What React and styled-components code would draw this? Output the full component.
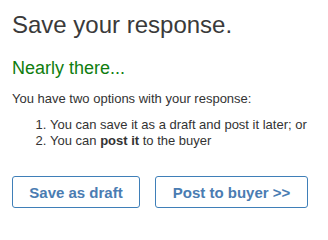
import React from "react";
import styled, { createGlobalStyle } from "styled-components";

const GlobalStyle = createGlobalStyle`
  html, body {
    margin: 0;
    padding: 0;
    background: #fff;
  }
  body {
    font-family: Arial, "Liberation Sans", sans-serif;
    color: #333;
  }
`;

const Panel = styled.div`
  padding: 10px 12px;
  width: 328px;
  box-sizing: border-box;
`;

const Title = styled.h1`
  margin: 0;
  font-size: 24px;
  font-weight: normal;
  color: #3a3a3a;
  line-height: 29px;
`;

const SubTitle = styled.h2`
  margin: 18px 0 0;
  font-size: 18px;
  font-weight: normal;
  color: #0f7d0f;
  line-height: 22px;
`;

const Text = styled.p`
  margin: 12px 0 0;
  font-size: 13px;
  line-height: 16px;
  color: #333;
`;

const Options = styled.ol`
  margin: 10px 0 0;
  padding-left: 38px;
  font-size: 13px;
  line-height: 16px;
  color: #333;
`;

const ButtonRow = styled.div`
  display: flex;
  gap: 15px;
  margin-top: 27px;
`;

const Button = styled.button`
  width: ${(p) => p.$width}px;
  height: 32px;
  padding: 0;
  background: #fff;
  border: 1px solid #3f7fb8;
  border-radius: 3px;
  color: #4a7cb2;
  font-family: Arial, "Liberation Sans", sans-serif;
  font-size: 15px;
  font-weight: bold;
  cursor: pointer;
`;

export default function App() {
  return (
    <>
      <GlobalStyle />
      <Panel>
        <Title>Save your response.</Title>
        <SubTitle>Nearly there...</SubTitle>
        <Text>You have two options with your response:</Text>
        <Options>
          <li>You can save it as a draft and post it later; or</li>
          <li>
            You can <b>post it</b> to the buyer
          </li>
        </Options>
        <ButtonRow>
          <Button $width={128}>Save as draft</Button>
          <Button $width={153}>Post to buyer &gt;&gt;</Button>
        </ButtonRow>
      </Panel>
    </>
  );
}
